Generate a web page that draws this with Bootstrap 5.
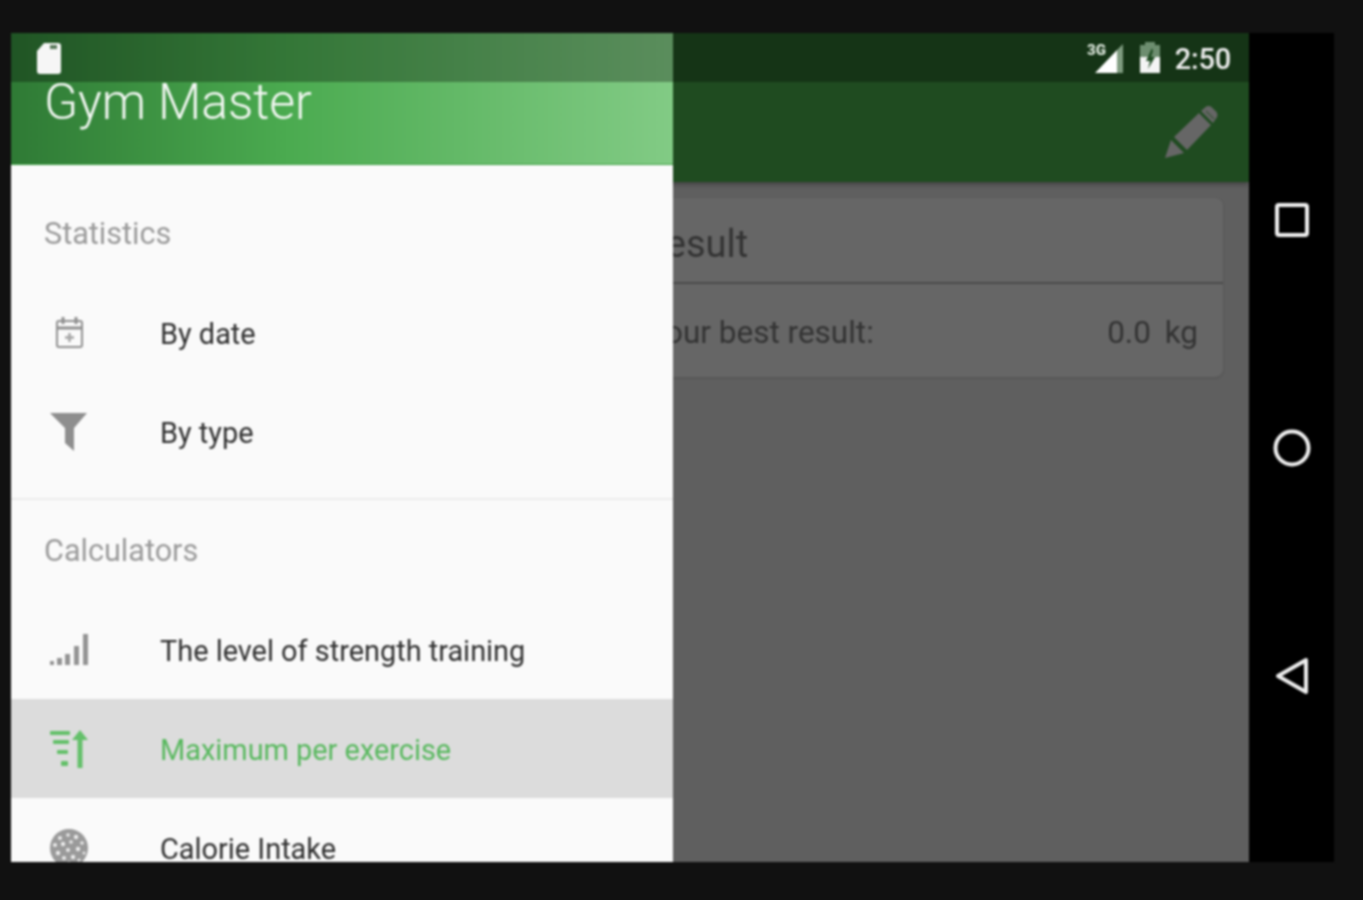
<!DOCTYPE html>
<html lang="en">
<head>
<meta charset="utf-8">
<title>Gym Master</title>
<link href="https://cdn.jsdelivr.net/npm/bootstrap@5.3.0/dist/css/bootstrap.min.css" rel="stylesheet">
<style>
html,body{height:100%;overflow:hidden}
body{background:#111;font-family:Roboto,"Liberation Sans",sans-serif}
.stage{padding:33px 0 0 11px;width:1334px;height:862px;box-sizing:content-box;}
.device{width:1323px;height:829px;filter:blur(.85px)}
.screen{width:1238px;background:#5f5f5f;position:relative;overflow:hidden}
.softkeys{width:85px;background:#000;gap:188px}
.topbar{background:#1f4b20;box-shadow:0 2px 5px rgba(0,0,0,.35)}
.statusline{height:49px;background:rgba(0,0,0,.3);position:relative;z-index:3;padding:0 18px 0 25px;color:#eee}
.clock{font-size:29px;font-weight:500;margin-left:14px;line-height:1;letter-spacing:-.2px;padding-top:4px}
.signalmark{margin-right:-2px}
.appline{height:100px;padding:24px 31px 0 0}
.drawer{position:absolute;left:0;top:0;bottom:0;width:662px;background:#fafafa;z-index:2;overflow:hidden}
.drawerhead{height:132px;background:linear-gradient(90deg,#2f7a35 0%,#4bab50 42%,#82cb85 100%);border-bottom:1px solid #3fa045;color:#f4f8f4;padding:41px 0 0 33px;font-size:50px;font-weight:300;line-height:56px;letter-spacing:-.1px}
.groupname{height:100px;padding:2px 0 0 33px;color:#9a9a9a;font-size:30.6px;display:flex;align-items:center;font-weight:400}
.firstgroup{height:118px;padding-top:20px}
.navrow.list-group-item{height:99px;background:transparent;border:0;padding:5px 0 0 33px;color:#303030;font-size:28.9px;display:flex;align-items:center;gap:66px;border-radius:0}
.navrow.list-group-item.rowon{background:#dcdcdc;color:#58b85e}
.navrow svg{margin-top:-5px}
.splitline{height:2px;background:#ececec;margin-top:17px}
.resultcard.card{margin:16px 26px 0 17px;height:179px;background:#666;border:0;border-radius:8px;box-shadow:0 1px 3px rgba(0,0,0,.15);color:#333}
.resultcard .card-header{height:86px;background:transparent;border-bottom:2px solid #4a4a4a;padding:9px 0 0 540px;font-size:38px;display:flex;align-items:center;color:#333;border-radius:8px 8px 0 0;white-space:nowrap}
.resultcard .card-body{padding:5px 25px 0 619px;display:flex;align-items:center;font-size:31.5px;height:92px;flex:none;white-space:nowrap}
.resultcard .card-body span:last-child{word-spacing:6px}
svg{display:block;flex:none}
</style>
</head>
<body>
<div class="stage">
<div class="device d-flex">
  <div class="screen d-flex flex-column">
    <div class="topbar">
      <div class="statusline d-flex align-items-center">
        <svg width="26" height="32" viewBox="0 0 26 32"><path d="M8 1h14a3 3 0 0 1 3 3v25a3 3 0 0 1-3 3H4a3 3 0 0 1-3-3V9z" fill="#f6f6f6"/><path d="M14 3h7v4h-7z" fill="#5a7a5c"/></svg>
        <svg class="ms-auto signalmark" width="38" height="32" viewBox="0 0 38 32"><path d="M36 2v29H30V8z" fill="#7f9c80"/><path d="M30 8v23H8z" fill="#fff"/><text x="0" y="13" font-family="Roboto,sans-serif" font-size="15" font-weight="900" fill="#d9e4d9">3G</text></svg>
        <svg class="ms-3" width="22" height="32" viewBox="0 0 22 32"><path d="M6 0h10v3h5v12H1V3h5z" fill="#6d8d6f"/><path d="M1 15h20v16H1z" fill="#f4f4f4"/><path d="M13 6 7 19h4l-2 8 7-12h-4l2-6z" fill="#1d4a20"/></svg>
        <span class="clock">2:50</span>
      </div>
      <div class="appline d-flex justify-content-end align-items-start">
        <svg width="54" height="54" viewBox="0 0 54 54"><g fill="#666"><path d="M1 52 7 34 20 47z"/><path d="M10 31 35 7 47 19 23 44z"/><path d="M37 5l4-3.500a5 5 0 0 1 7 0l4 4a5 5 0 0 1 0 7L49 17z"/></g><path d="M38 9 46 17M42 5 50 13" stroke="#1f4b20" stroke-width="1.500" opacity=".55"/></svg>
      </div>
    </div>
    <div class="card resultcard">
      <div class="card-header">Best result</div>
      <div class="card-body"><span>Your best result:</span><span class="ms-auto">0.0 kg</span></div>
    </div>

    <div class="drawer">
      <div class="drawerhead">Gym Master</div>
      <div class="groupname firstgroup">Statistics</div>
      <div class="list-group list-group-flush">
        <a class="list-group-item navrow" href="#">
          <svg width="50" height="34" viewBox="0 0 50 34"><g fill="none" stroke="#8f8f8f" stroke-width="2"><rect x="13" y="5" width="25" height="26" rx="2"/><path d="M13 12h25" stroke-width="3"/><path d="M19 1v7M32 1v7" stroke-width="3"/><path d="M25.500 17v9M21 21.500h9" stroke-width="2.500" stroke="#a5a5a5"/></g></svg>
          <span>By date</span>
        </a>
        <a class="list-group-item navrow" href="#">
          <svg width="50" height="40" viewBox="0 0 50 40"><path d="M6 1h37L30 16v23l-9-8V16z" fill="#8e8e8e"/></svg>
          <span>By type</span>
        </a>
      </div>
      <div class="splitline"></div>
      <div class="groupname">Calculators</div>
      <div class="list-group list-group-flush">
        <a class="list-group-item navrow" href="#">
          <svg width="50" height="34" viewBox="0 0 50 34"><g fill="#949494"><rect x="6" y="28" width="4" height="4"/><rect x="13" y="25" width="5" height="7"/><rect x="21" y="21" width="5" height="11"/><rect x="30" y="13" width="5" height="19"/><rect x="39" y="1" width="5" height="31"/></g></svg>
          <span>The level of strength training</span>
        </a>
        <a class="list-group-item navrow rowon" href="#">
          <svg width="50" height="40" viewBox="0 0 50 40"><g fill="#64c06a"><rect x="6" y="2" width="20" height="4" rx="1"/><rect x="9" y="11" width="16" height="4" rx="1"/><rect x="13" y="21" width="11" height="4" rx="1"/><rect x="17" y="32" width="7" height="5" rx="1"/><path d="M36 1l8 10h-5.500v28h-5V11H28z"/></g></svg>
          <span>Maximum per exercise</span>
        </a>
        <a class="list-group-item navrow" href="#">
          <svg width="50" height="40" viewBox="0 0 50 40"><circle cx="25" cy="20" r="19" fill="#9a9a9a"/><g fill="#ececec"><circle cx="16" cy="10" r="2"/><circle cx="24" cy="7" r="1.800"/><circle cx="32" cy="9" r="2.200"/><circle cx="38" cy="15" r="1.800"/><circle cx="11" cy="17" r="2"/><circle cx="19" cy="16" r="2.200"/><circle cx="27" cy="14" r="1.800"/><circle cx="34" cy="21" r="2.200"/><circle cx="24" cy="22" r="2"/><circle cx="14" cy="25" r="2.200"/><circle cx="40" cy="25" r="1.500"/><circle cx="20" cy="30" r="2"/><circle cx="29" cy="29" r="2.200"/><circle cx="35" cy="32" r="1.600"/><circle cx="25" cy="35" r="1.800"/></g></svg>
          <span>Calorie Intake</span>
        </a>
      </div>
    </div>
  </div>
  <div class="softkeys d-flex flex-column align-items-center justify-content-center">
    <svg width="40" height="40" viewBox="0 0 40 40"><rect x="5" y="5" width="30" height="30" rx="2" fill="none" stroke="#eee" stroke-width="4"/></svg>
    <svg width="40" height="40" viewBox="0 0 40 40"><circle cx="20" cy="20" r="16.500" fill="none" stroke="#eee" stroke-width="4"/></svg>
    <svg width="40" height="40" viewBox="0 0 40 40"><path d="M34 4v32L6 20z" fill="none" stroke="#eee" stroke-width="4" stroke-linejoin="round"/></svg>
  </div>
</div>
</div>
<script src="https://cdn.jsdelivr.net/npm/bootstrap@5.3.0/dist/js/bootstrap.bundle.min.js"></script>
</body>
</html>
